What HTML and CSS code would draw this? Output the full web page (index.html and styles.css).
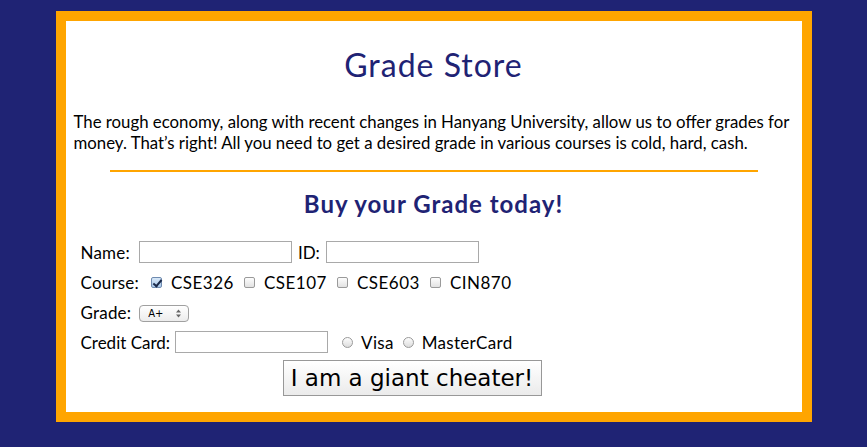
FILE: index.html
```html
<!DOCTYPE html>
<html>
<head>
<meta charset="utf-8">
<title>Grade Store</title>
<link rel="stylesheet" href="styles.css">
</head>
<body>
<div class="page">
  <h1 class="title">Grade Store</h1>
  <p class="intro">The rough economy, along with recent changes in Hanyang University, allow us to offer grades for money. That’s right! All you need to get a desired grade in various courses is cold, hard, cash.</p>
  <hr class="rule">
  <h2 class="subtitle">Buy your Grade today!</h2>
  <form class="form">
    <div class="row">
      <label class="lbl lbl-name">Name:</label>
      <input type="text" class="field">
      <label class="lbl">ID:</label>
      <input type="text" class="field">
    </div>
    <div class="row">
      <span class="lbl lbl-course">Course:</span>
      <label class="opt opt-first"><input type="checkbox" class="check" checked> CSE326</label>
      <label class="opt"><input type="checkbox" class="check"> CSE107</label>
      <label class="opt"><input type="checkbox" class="check"> CSE603</label>
      <label class="opt"><input type="checkbox" class="check"> CIN870</label>
    </div>
    <div class="row">
      <label class="lbl lbl-grade">Grade:</label>
      <span class="selwrap">
        <select class="sel">
          <option>A+</option>
          <option>A</option>
          <option>B+</option>
        </select>
        <svg class="selarrow" width="5" height="9" viewBox="0 0 5 9"><path d="M0 3.5 L2.5 0.5 L5 3.5 Z M0 5.5 L2.5 8.5 L5 5.5 Z" fill="#666"/></svg>
      </span>
    </div>
    <div class="row">
      <label class="lbl lbl-card">Credit Card:</label>
      <input type="text" class="field field-card">
      <label class="opt opt-radio"><input type="radio" name="card" class="radio"> Visa</label>
      <label class="opt opt-radio opt-radio-next"><input type="radio" name="card" class="radio"> MasterCard</label>
    </div>
    <div class="submitrow">
      <button type="button" class="btn">I am a giant cheater!</button>
    </div>
  </form>
</div>
</body>
</html>
```

FILE: styles.css
```css
html, body {
  margin: 0;
  padding: 0;
}
body {
  background: #1f2374;
  font-family: Lato, "Liberation Sans", sans-serif;
  font-size: 16.8px;
  color: #000;
}
.page {
  width: 720px;
  margin: 11px auto 0;
  padding: 0 8px;
  height: 391px;
  background: #fff;
  border: 10px solid #ffa500;
  box-sizing: content-box;
}
.title {
  margin: 25px 0 0;
  text-align: center;
  font-size: 32px;
  line-height: 38px;
  font-weight: normal;
  letter-spacing: 1px;
  color: #1f2374;
}
.intro {
  margin: 27px 0 0;
  line-height: 21px;
}
.rule {
  width: 90%;
  height: 2px;
  border: none;
  background: #ffa500;
  margin: 17px auto 0;
}
.subtitle {
  margin: 17px 0 0;
  text-align: center;
  font-size: 24px;
  line-height: 29px;
  font-weight: bold;
  letter-spacing: 1px;
  color: #1f2374;
}
.form {
  margin: 19px 0 0 7px;
  font-size: 17px;
}
.row {
  display: flex;
  align-items: center;
  height: 30px;
}
.lbl {
  margin-right: 6px;
}
.lbl-name {
  margin-right: 9px;
  letter-spacing: 0.2px;
}
.lbl-course {
  margin-right: 0;
  letter-spacing: 0.2px;
}
.lbl-grade {
  margin-right: 8px;
  letter-spacing: 0.2px;
}
.lbl-card {
  margin-right: 5px;
}
.field {
  width: 149px;
  height: 18px;
  padding: 1px;
  margin: 0 6px 0 0;
  border: 1px solid #a9a9a9;
  box-sizing: content-box;
}
.opt {
  display: flex;
  align-items: center;
  margin-left: 10px;
  gap: 9px;
  letter-spacing: 0.5px;
}
.opt-first {
  margin-left: 12px;
}
.check {
  appearance: none;
  width: 11px;
  height: 11px;
  margin: 0;
  border: 1px solid #9a9a9a;
  border-radius: 2px;
  background: linear-gradient(#fdfdfd, #e2e2e2);
  position: relative;
}
.check:checked {
  background: linear-gradient(#d8e8f8, #a9c8ea);
  border-color: #6f8bb0;
}
.check:checked::after {
  content: "";
  position: absolute;
  left: 3px;
  top: 0px;
  width: 3px;
  height: 7px;
  border: solid #1b2a4a;
  border-width: 0 2px 2px 0;
  transform: rotate(40deg);
}
.field-card {
  margin-right: 8px;
}
.opt-radio {
  margin-left: 6px;
  gap: 8px;
  letter-spacing: 0.3px;
}
.opt-radio-next {
  margin-left: 9px;
}
.radio {
  appearance: none;
  width: 11px;
  height: 11px;
  margin: 0;
  border: 1px solid #9a9a9a;
  border-radius: 50%;
  background: linear-gradient(#fdfdfd, #dcdcdc);
}
.selwrap {
  position: relative;
  display: inline-block;
  margin-top: 2px;
}
.sel {
  appearance: none;
  width: 50px;
  height: 17px;
  margin: 0;
  padding: 0 0 0 8px;
  border: 1px solid #a0a0a0;
  border-radius: 4px;
  background: linear-gradient(#ffffff, #ececec);
  font-family: "DejaVu Sans", sans-serif;
  font-size: 10px;
  color: #000;
  display: block;
}
.selarrow {
  position: absolute;
  right: 8px;
  top: 4px;
  pointer-events: none;
}
.submitrow {
  display: flex;
  padding-left: 202px;
  margin-top: 3px;
}
.btn {
  width: 259px;
  height: 36px;
  padding: 0;
  border: 1px solid #989898;
  border-radius: 0;
  background: linear-gradient(#ffffff, #ebebeb);
  font-family: "DejaVu Sans", sans-serif;
  font-size: 23px;
  color: #000;
}
```
